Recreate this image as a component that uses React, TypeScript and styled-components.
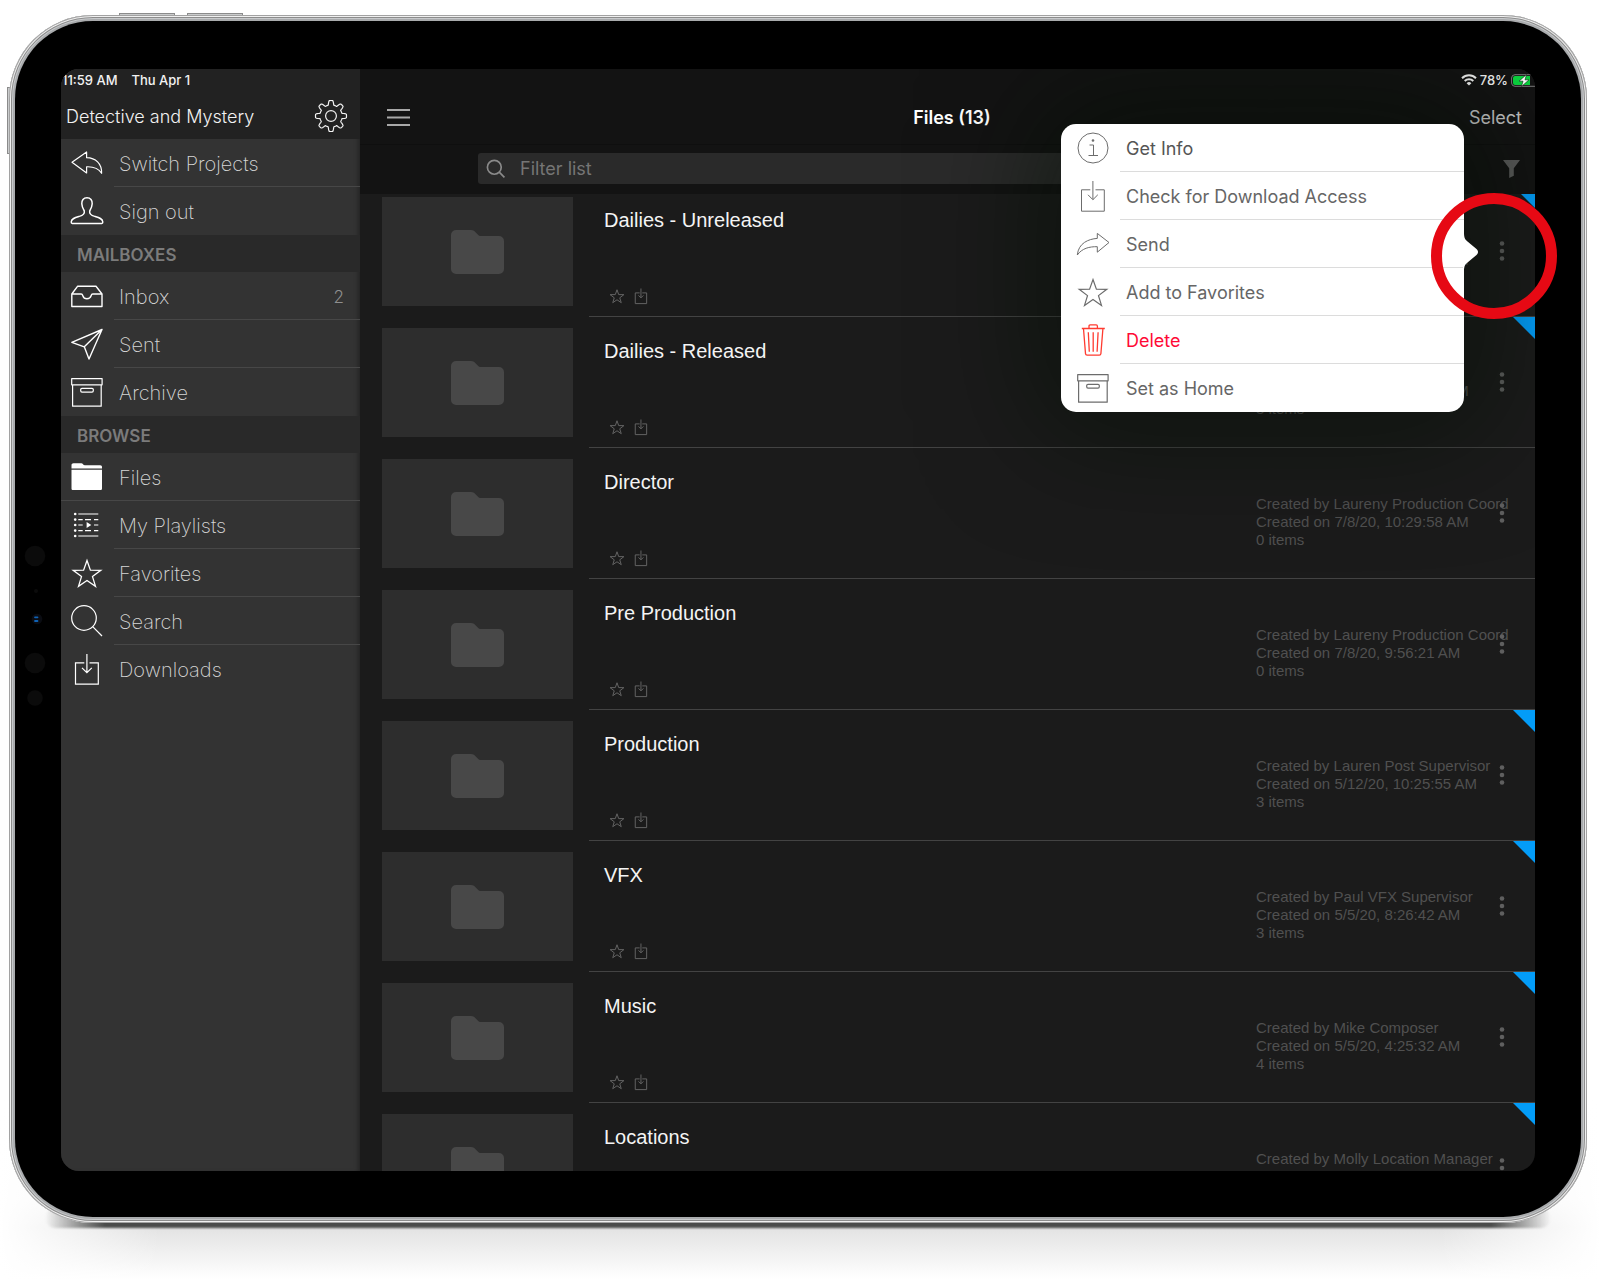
import React from "react";
import styled, { createGlobalStyle, css } from "styled-components";

const sans = `Inter, "Liberation Sans", sans-serif`;
const grotesk = `"Liberation Sans", Inter, sans-serif`;

const GlobalStyle = createGlobalStyle`
  *, *::before, *::after { box-sizing: border-box; }
  body { margin: 0; background: #fff; font-family: ${sans}; }
  h1, h2, h3, p, ul { margin: 0; padding: 0; font-weight: 400; }
  ul { list-style: none; }
  button { font: inherit; color: inherit; background: none; border: 0; padding: 0; cursor: pointer; }
  a { color: inherit; text-decoration: none; }
  svg { display: block; flex: none; }
`;

/* ---------- device ---------- */

const Page = styled.div`
  height: 100vh;
  min-height: 720px;
  padding: 15px 13px 56px 9px;
  display: flex;
  background:
    linear-gradient(to right, #fff, transparent 160px, transparent calc(100% - 160px), #fff),
    linear-gradient(to top, #fff 0, #e2e2e2 52px, #f4f4f4 80px, #fff 180px);
`;

const Frame = styled.div`
  position: relative;
  flex: 1;
  min-width: 0;
  padding: 6px;
  border-radius: 84px;
  background: #a9abad;
  box-shadow:
    inset 0 0 0 1px #a2a2a2,
    inset 0 0 0 2px #f0f0f0,
    inset 0 0 0 3px #8c8c8c,
    inset 0 0 0 4px #c8cacc;
  display: flex;

  &::before {
    content: "";
    position: absolute;
    z-index: -1;
    left: 36px;
    right: 36px;
    bottom: -5px;
    height: 20px;
    border-radius: 10px;
    background: linear-gradient(to right, transparent, #4a4b4a 60px, #4a4b4a calc(100% - 60px), transparent);
    filter: blur(1px);
  }
`;

const Stage = styled.div`
  position: relative;
  z-index: 0;
  flex: 1;
  display: flex;
  min-width: 0;
`;

const HardwareKey = styled.span<{ $side: "top" | "left"; $offset: number }>`
  position: absolute;
  z-index: -1;
  background: #c9cbcc;
  border: 1px solid #8b8b8b;
  ${(p) =>
    p.$side === "top"
      ? css`left: ${p.$offset}px; top: -2px; width: 56px; height: 4px;`
      : css`top: ${p.$offset}px; left: -2px; height: 67px; width: 4px;`}
`;

const Bezel = styled.div`
  position: relative;
  flex: 1;
  min-width: 0;
  border-radius: 78px;
  background: #000;
  padding: 48px 0 46px;
  display: grid;
  grid-template-columns: 46px minmax(0, 1fr) 46px;
  grid-template-rows: minmax(0, 1fr);
`;

const SensorStrip = styled.div`
  display: flex;
  align-items: center;
`;

const Screen = styled.div`
  grid-column: 2;
  border-radius: 18px;
  overflow: hidden;
  display: grid;
  grid-template-columns: 299px minmax(0, 1fr);
  grid-template-rows: minmax(0, 1fr);
  background: #1b1b1b;
`;

const Highlight = styled.div`
  position: absolute;
  top: 172px;
  right: 24px;
  width: 126px;
  height: 126px;
  border: 11px solid #e60914;
  border-radius: 50%;
  pointer-events: none;
`;

/* ---------- sidebar ---------- */

const Sidebar = styled.nav`
  background: #333;
  color: #d6d6d6;
  box-shadow: inset -4px 0 4px -2px rgba(0, 0, 0, 0.3);
`;

const SidebarHead = styled.header`
  background: #222;
  color: #f2f2f2;
`;

const StatusBar = styled.div<{ $end?: boolean }>`
  height: 22px;
  display: flex;
  align-items: center;
  gap: ${(p) => (p.$end ? 3 : 14)}px;
  padding: ${(p) => (p.$end ? "0" : "0 1px")};
  justify-content: ${(p) => (p.$end ? "flex-end" : "flex-start")};
  font-size: 13px;
  line-height: 22px;
  font-weight: 500;
  color: #f2f2f2;
`;

const ProjectRow = styled.div`
  height: 48px;
  padding: 2px 13px 0 5px;
  display: flex;
  align-items: center;
  justify-content: space-between;
`;

const ProjectName = styled.h1`
  padding-top: 2px;
  font-size: 18px;
  line-height: 24px;
  font-weight: 300;
`;

const SectionLabel = styled.h2`
  height: 37px;
  padding-left: 16px;
  background: #292929;
  color: #7b7b7b;
  font-size: 17px;
  line-height: 40px;
  font-weight: 600;
`;

const NavLink = styled.a<{ $line?: "inset" | "full" }>`
  height: 48px;
  padding: 0 16px 0 10px;
  display: flex;
  align-items: center;
  gap: 16px;
  font-size: 20px;
  line-height: 24px;
  font-weight: 200;
  background: ${(p) =>
    p.$line
      ? `linear-gradient(#474747, #474747) ${p.$line === "inset" ? "53px" : "0"} 100% / 100% 1px no-repeat`
      : "none"};

  svg { color: #fff; }
  span { padding-top: 2px; }
`;

const NavCount = styled.span`
  margin-left: auto;
  font-size: 17px;
  font-weight: 300;
  color: #8f8f8f;
`;

/* ---------- main ---------- */

const Main = styled.main`
  position: relative;
  overflow: hidden;
  display: flex;
  flex-direction: column;
`;

const TopBar = styled.header`
  background: #131313;
  box-shadow: inset 0 -1px 0 #0f0f0f;
`;

const Toolbar = styled.div`
  height: 54px;
  padding: 0 13px 0 22px;
  display: grid;
  grid-template-columns: 1fr auto 1fr;
  align-items: center;
`;

const MenuButton = styled.button`
  justify-self: start;
  padding: 4px;
  color: #a8a8a8;
`;

const Title = styled.h2`
  font-size: 18px;
  line-height: 24px;
  font-weight: 600;
  color: #fff;
`;

const SelectButton = styled.button`
  justify-self: end;
  font-size: 18px;
  line-height: 24px;
  color: #c4c4c4;
`;

const FilterBar = styled.div`
  height: 49px;
  padding: 0 15px 2px 118px;
  display: flex;
  align-items: center;
  justify-content: space-between;
  gap: 86px;
  background: #131313;
  color: #5a5a5a;
`;

const FilterField = styled.label`
  flex: 1;
  height: 31px;
  padding: 0 9px;
  display: flex;
  align-items: center;
  gap: 15px;
  border-radius: 3px;
  background: #2a2a2a;
  color: #8a8a8a;
`;

const FilterInput = styled.input`
  flex: 1;
  min-width: 0;
  border: 0;
  padding: 0;
  background: none;
  outline: none;
  color: #ddd;
  font-family: ${sans};
  font-size: 18px;
  line-height: 24px;

  &::placeholder { color: #757575; opacity: 1; }
`;

const ListViewport = styled.div`
  flex: 1;
  min-height: 0;
  overflow: hidden;
`;

const FileList = styled.ul`
  margin-top: -8px;
`;

const FileRow = styled.li`
  height: 131px;
  padding-left: 22px;
  display: flex;
  gap: 16px;
`;

const Thumb = styled.div`
  width: 191px;
  height: 109px;
  margin-top: 11px;
  display: flex;
  align-items: center;
  justify-content: center;
  background: #2d2d2d;
  color: #484848;
`;

const RowBody = styled.div<{ $flag: boolean }>`
  flex: 1;
  min-width: 0;
  display: grid;
  grid-template-columns: minmax(0, 1fr) 213px 66px;
  border-bottom: 1px solid #434343;
  background: ${(p) =>
    p.$flag ? "linear-gradient(45deg, transparent 48%, #039cf8 52%) 100% 0 / 22px 22px no-repeat" : "none"};
`;

const RowMain = styled.div`
  padding: 22px 0 12px 15px;
  display: flex;
  flex-direction: column;
  justify-content: space-between;
`;

const FileName = styled.h3`
  font-family: ${grotesk};
  font-size: 20px;
  line-height: 24px;
  color: #f4f4f4;
`;

const RowActions = styled.div`
  padding-left: 5px;
  display: flex;
  gap: 8px;
  color: #636363;
`;

const Meta = styled.p`
  padding-top: 47px;
  font-family: ${grotesk};
  font-size: 15px;
  line-height: 18px;
  color: #505050;
  white-space: nowrap;
`;

const MoreButton = styled.button`
  display: flex;
  align-items: center;
  justify-content: center;
  color: #5f5f5f;
`;

/* ---------- popover ---------- */

const Popover = styled.div`
  position: absolute;
  top: 55px;
  right: 71px;
  width: 403px;
  border-radius: 15px;
  background: #fff;
  box-shadow: 0 0 120px 16px rgba(4, 14, 4, 0.6);
`;

const PopoverArrow = styled.svg`
  position: absolute;
  left: 100%;
  top: 108px;
  margin-left: -1px;
`;

const MenuItem = styled.button<{ $tone?: "strong" | "danger" }>`
  width: 100%;
  height: 48px;
  padding: 0 16px;
  display: flex;
  align-items: center;
  gap: 17px;
  font-size: 18px;
  line-height: 24px;
  color: ${(p) => (p.$tone === "danger" ? "#ff0a36" : p.$tone === "strong" ? "#555" : "#666")};

  svg { color: ${(p) => (p.$tone === "danger" ? "#ff3b30" : "#6c6c6c")}; }
  span { padding-top: 2px; }

  &:not(:last-of-type) {
    background: linear-gradient(#dcdcdc, #dcdcdc) 59px 100% / 100% 1px no-repeat;
  }
`;

/* ---------- icons ---------- */

type IconProps = { size?: number; weight?: number; children?: React.ReactNode };

const Icon = ({ size = 32, weight = 1.2, children }: IconProps) => (
  <svg width={size} height={size} viewBox="0 0 32 32" fill="none" stroke="currentColor" strokeWidth={weight} strokeLinejoin="round" overflow="visible" aria-hidden="true">
    {children}
  </svg>
);

const gearPath = (() => {
  const pts: string[] = [];
  for (let i = 0; i < 192; i++) {
    const a = (i / 192) * Math.PI * 2;
    const r = 13.2 + 2.3 * Math.max(-0.9, Math.min(1, 1.9 * Math.cos(8 * a) - 0.1));
    pts.push(`${(16 + r * Math.sin(a)).toFixed(2)} ${(16 - r * Math.cos(a)).toFixed(2)}`);
  }
  return `M${pts.join("L")}Z`;
})();

const GearIcon = () => (
  <Icon>
    <path d={gearPath} />
    <circle cx="16" cy="16" r="5.4" />
  </Icon>
);
const ReplyIcon = () => (
  <Icon>
    <path d="M1 15.3 15.6 5v5.7C24.5 11 31 16.5 30.6 26.3 27.5 21.4 22.5 19.5 15.6 19.8V26Z" />
  </Icon>
);
const PersonIcon = () => (
  <Icon weight={1.5}>
    <path d="M16 2.8c-3.6 0-5.4 2.6-5.2 6 .1 3 1.4 5.400 2.500 7.200.6 3-1.600 4.400-5 5.400C4.200 22.500.300 23.400.2 27c0 1 .300 1.400 1 1.400h29.600c.7 0 1-.4 1-1.400-.1-3.600-4-4.500-8.100-5.600-3.400-1-5.600-2.400-5-5.400 1.100-1.800 2.400-4.200 2.500-7.200.2-3.400-1.600-6-5.200-6Z" />
  </Icon>
);
const InboxIcon = () => (
  <Icon weight={1.4}>
    <path d="M.8 14 6.500 6.300H25L31 14v12.500H.8ZM.8 14h9.400c1.200 0 1.300.8 1.600 1.800.6 1.900 2 3 4.100 3s3.600-1.100 4.200-3c.3-1 .4-1.800 1.600-1.800H31" />
  </Icon>
);
const SentIcon = () => (
  <Icon weight={1.4}>
    <path d="M31 1.500.8 14.300l12.500 4.500L18 31ZM31 1.500 13.300 18.800" />
  </Icon>
);
const ArchiveIcon = () => (
  <Icon>
    <path d="M.7 2.600h30.400v6.200H.7ZM1.600 8.800v21.400h28.600V8.800" />
    <rect x="9.700" y="12.300" width="12.600" height="3.800" rx="1.300" />
  </Icon>
);
const FilesIcon = () => (
  <Icon>
    <path stroke="none" fill="currentColor" d="M.5 7.600V4.200c0-1.200.8-1.900 2-1.900h7.800c1.600 0 1.800 2 3.600 2h15.300c1.200 0 1.800.7 1.800 1.900v1.400ZM.5 8.800H31v18.600c0 1-.6 1.600-1.600 1.600H2.100c-1 0-1.600-.6-1.600-1.600Z" />
  </Icon>
);
const PlaylistIcon = () => (
  <Icon>
    <path d="M7.300 5h20M7.300 10.600h4.400M14 10.600h6M23 10.600h4.300M7.300 16h4.400M23 16h4.300M7.300 21.600h4.400M14 21.600h6M23 21.600h4.300M7.300 27h20" />
    <path stroke="none" fill="currentColor" d="M15.600 13v6l4.700-3Z" />
    {[5, 10.6, 16, 21.6, 27].map((y) => (
      <circle key={y} cx="4.200" cy={y} r="1.300" stroke="none" fill="currentColor" />
    ))}
  </Icon>
);
const StarIcon = ({ size, weight = 1.3 }: IconProps) => (
  <Icon size={size} weight={weight}>
    <path strokeLinejoin="miter" d="m16 3.500 3.400 9.700 10.400.1-8.300 6.300 3 9.800-8.500-5.900-8.500 5.900 3-9.800-8.300-6.300 10.400-.1Z" />
  </Icon>
);
const SearchIcon = ({ size, weight = 1.2 }: IconProps) => (
  <Icon size={size} weight={weight}>
    <circle cx="13" cy="13" r="12.300" />
    <path d="M21.700 21.700 31 31" />
  </Icon>
);
const DownloadIcon = ({ size, weight = 1.2 }: IconProps) => (
  <Icon size={size} weight={weight}>
    <path strokeLinejoin="miter" d="M13.300 9.800H4.500v21.400h22.800V9.800h-8.800M15.900 1v18.500M11 14.800l4.900 4.900 4.900-4.900" />
  </Icon>
);
const InfoIcon = () => (
  <Icon weight={1}>
    <circle cx="16" cy="16" r="15" />
    <path d="M12.500 13h4v10.500M11.500 23.500h9.500" />
    <circle cx="16" cy="8.500" r="1.300" stroke="none" fill="currentColor" />
  </Icon>
);
const SendIcon = () => (
  <Icon weight={1}>
    <path d="M32 14.500 20.300 5.400v5C11.500 11 1.500 15 .3 27c4.700-6.700 12.200-8.500 20-8.300v5.500Z" />
  </Icon>
);
const TrashIcon = () => (
  <Icon weight={1.3}>
    <path d="M4.800 4.500h23M12 4.300V2.200C12 1.300 12.400.9 13.200.9h6c.8 0 1.200.4 1.200 1.300v2.100M6.500 4.800l2 24.800c.1 1 .6 1.500 1.600 1.500h12.200c1 0 1.500-.5 1.600-1.500l2-24.800M11.300 8.300l1 19.500M16.200 8.300v19.500M21.100 8.300l-1 19.500" />
  </Icon>
);
const FolderGlyph = () => (
  <svg width="53" height="44" viewBox="0 0 53 44" fill="currentColor" aria-hidden="true">
    <path d="M5 0h15c2 0 3 .7 4 1.800l3 3c.8.800 1.500 1.200 3 1.200h18a5 5 0 0 1 5 5v28a5 5 0 0 1-5 5H5a5 5 0 0 1-5-5V5a5 5 0 0 1 5-5Z" />
  </svg>
);
const HamburgerIcon = () => (
  <svg width="24" height="20" viewBox="0 0 24 20" stroke="currentColor" strokeWidth="2" aria-hidden="true">
    <path d="M1 2h23M1 9.500h23M1 17h23" />
  </svg>
);
const FunnelIcon = () => (
  <svg width="17" height="18" viewBox="0 0 17 18" fill="currentColor" aria-hidden="true">
    <path d="M0 0h17l-6.200 8.300v7.500L6.200 18V8.300Z" />
  </svg>
);
const DotsIcon = () => (
  <svg width="6" height="20" viewBox="0 0 6 20" fill="currentColor" aria-hidden="true">
    <circle cx="3" cy="2.500" r="2.300" />
    <circle cx="3" cy="10" r="2.300" />
    <circle cx="3" cy="17.500" r="2.300" />
  </svg>
);
const WifiIcon = () => (
  <svg width="16" height="12" viewBox="0 0 16 12" fill="none" stroke="#f2f2f2" strokeWidth="2" aria-hidden="true">
    <path d="M1 4.200a10 10 0 0 1 14 0M3.700 7a6.200 6.200 0 0 1 8.600 0" />
    <path stroke="none" fill="#f2f2f2" d="M8 11.600 5.600 9.200a3.400 3.400 0 0 1 4.800 0Z" />
  </svg>
);
const BatteryIcon = () => (
  <svg width="24" height="13" viewBox="0 0 24 13" aria-hidden="true">
    <path d="M24 12.300H4A3.400 3.400 0 0 1 .6 9V4A3.400 3.400 0 0 1 4 .7h16" fill="none" stroke="#7d7d7d" strokeWidth="1" />
    <path d="M4 2h15v9H4a2 2 0 0 1-2-2V4a2 2 0 0 1 2-2Z" fill="#0bd53f" />
    <path d="M15.500.5 8 7.200h4L10.500 12.500 18 5.800h-4Z" fill="#fff" stroke="#0a2a10" strokeWidth=".6" />
  </svg>
);
const Sensors = () => (
  <svg width="46" height="180" viewBox="0 0 46 180" fill="#0b0b0b" aria-hidden="true">
    <circle cx="20" cy="26" r="10.300" />
    <circle cx="21" cy="61" r="2" />
    <circle cx="22" cy="89" r="5.300" fill="#0a0c12" />
    <path d="M20 87.300h2.500M20 91h2.500" stroke="#0f62b5" strokeWidth="1.800" strokeLinecap="round" />
    <circle cx="20" cy="133" r="10.300" />
    <circle cx="20" cy="168" r="7.800" />
  </svg>
);

/* ---------- data ---------- */

type NavEntry = { label: string; icon: React.ReactNode; line?: "inset" | "full"; count?: number };

const account: NavEntry[] = [
  { label: "Switch Projects", icon: <ReplyIcon />, line: "inset" },
  { label: "Sign out", icon: <PersonIcon /> },
];
const mailboxes: NavEntry[] = [
  { label: "Inbox", icon: <InboxIcon />, line: "inset", count: 2 },
  { label: "Sent", icon: <SentIcon />, line: "inset" },
  { label: "Archive", icon: <ArchiveIcon /> },
];
const browse: NavEntry[] = [
  { label: "Files", icon: <FilesIcon />, line: "full" },
  { label: "My Playlists", icon: <PlaylistIcon />, line: "inset" },
  { label: "Favorites", icon: <StarIcon />, line: "inset" },
  { label: "Search", icon: <SearchIcon />, line: "inset" },
  { label: "Downloads", icon: <DownloadIcon /> },
];

const files = [
  { name: "Dailies - Unreleased", by: "Lauren Producer", on: "7/8/20, 10:28:17 AM", items: 3, flag: true },
  { name: "Dailies - Released", by: "Lauren Producer", on: "7/8/20, 10:28:36 AM", items: 3, flag: true },
  { name: "Director", by: "Laureny Production Coord", on: "7/8/20, 10:29:58 AM", items: 0, flag: false },
  { name: "Pre Production", by: "Laureny Production Coord", on: "7/8/20, 9:56:21 AM", items: 0, flag: false },
  { name: "Production", by: "Lauren Post Supervisor", on: "5/12/20, 10:25:55 AM", items: 3, flag: true },
  { name: "VFX", by: "Paul VFX Supervisor", on: "5/5/20, 8:26:42 AM", items: 3, flag: true },
  { name: "Music", by: "Mike Composer", on: "5/5/20, 4:25:32 AM", items: 4, flag: true },
  { name: "Locations", by: "Molly Location Manager", on: "5/5/20, 10:47:14 AM", items: 4, flag: true },
];

const actions: { label: string; icon: React.ReactNode; tone?: "strong" | "danger" }[] = [
  { label: "Get Info", icon: <InfoIcon />, tone: "strong" },
  { label: "Check for Download Access", icon: <DownloadIcon weight={1} /> },
  { label: "Send", icon: <SendIcon /> },
  { label: "Add to Favorites", icon: <StarIcon weight={1.2} /> },
  { label: "Delete", icon: <TrashIcon />, tone: "danger" },
  { label: "Set as Home", icon: <ArchiveIcon /> },
];

const NavList = ({ entries }: { entries: NavEntry[] }) => (
  <ul>
    {entries.map((e) => (
      <li key={e.label}>
        <NavLink href="#" $line={e.line}>
          {e.icon}
          <span>{e.label}</span>
          {e.count !== undefined && <NavCount>{e.count}</NavCount>}
        </NavLink>
      </li>
    ))}
  </ul>
);

export default function App() {
  return (
    <>
      <GlobalStyle />
      <Page>
        <Stage>
          <HardwareKey $side="top" $offset={110} />
          <HardwareKey $side="top" $offset={178} />
          <HardwareKey $side="left" $offset={72} />
          <Frame>
            <Bezel>
              <SensorStrip>
                <Sensors />
              </SensorStrip>
              <Screen>
                <Sidebar>
                  <SidebarHead>
                    <StatusBar>
                      <span>11:59 AM</span>
                      <span>Thu Apr 1</span>
                    </StatusBar>
                    <ProjectRow>
                      <ProjectName>Detective and Mystery</ProjectName>
                      <button type="button" aria-label="Settings">
                        <GearIcon />
                      </button>
                    </ProjectRow>
                  </SidebarHead>
                  <NavList entries={account} />
                  <SectionLabel>MAILBOXES</SectionLabel>
                  <NavList entries={mailboxes} />
                  <SectionLabel>BROWSE</SectionLabel>
                  <NavList entries={browse} />
                </Sidebar>

                <Main>
                  <TopBar>
                    <StatusBar $end>
                      <WifiIcon />
                      <span>78%</span>
                      <BatteryIcon />
                    </StatusBar>
                    <Toolbar>
                      <MenuButton type="button" aria-label="Toggle sidebar">
                        <HamburgerIcon />
                      </MenuButton>
                      <Title>Files (13)</Title>
                      <SelectButton type="button">Select</SelectButton>
                    </Toolbar>
                  </TopBar>
                  <FilterBar>
                    <FilterField>
                      <SearchIcon size={18} weight={3} />
                      <FilterInput type="text" placeholder="Filter list" aria-label="Filter list" />
                    </FilterField>
                    <button type="button" aria-label="Filter options">
                      <FunnelIcon />
                    </button>
                  </FilterBar>
                  <ListViewport>
                    <FileList>
                      {files.map((f) => (
                        <FileRow key={f.name}>
                          <Thumb>
                            <FolderGlyph />
                          </Thumb>
                          <RowBody $flag={f.flag}>
                            <RowMain>
                              <FileName>{f.name}</FileName>
                              <RowActions>
                                <button type="button" aria-label="Favorite">
                                  <StarIcon size={16} weight={2} />
                                </button>
                                <button type="button" aria-label="Download">
                                  <DownloadIcon size={16} weight={2} />
                                </button>
                              </RowActions>
                            </RowMain>
                            <Meta>
                              Created by {f.by}
                              <br />
                              Created on {f.on}
                              <br />
                              {f.items} items
                            </Meta>
                            <MoreButton type="button" aria-label={`More actions for ${f.name}`}>
                              <DotsIcon />
                            </MoreButton>
                          </RowBody>
                        </FileRow>
                      ))}
                    </FileList>
                  </ListViewport>
                  <Popover>
                    {actions.map((a) => (
                      <MenuItem key={a.label} type="button" $tone={a.tone}>
                        {a.icon}
                        <span>{a.label}</span>
                      </MenuItem>
                    ))}
                    <PopoverArrow width="16" height="40" viewBox="0 0 16 40" fill="#fff" aria-hidden="true">
                      <path d="M0 0h1c0 5 .5 7 3.500 9.500l9 7.500c2 1.700 2 4.300 0 6l-9 7.500C1.500 33 1 35 1 40H0Z" />
                    </PopoverArrow>
                  </Popover>
                </Main>
              </Screen>
              <Highlight />
            </Bezel>
          </Frame>
        </Stage>
      </Page>
    </>
  );
}
